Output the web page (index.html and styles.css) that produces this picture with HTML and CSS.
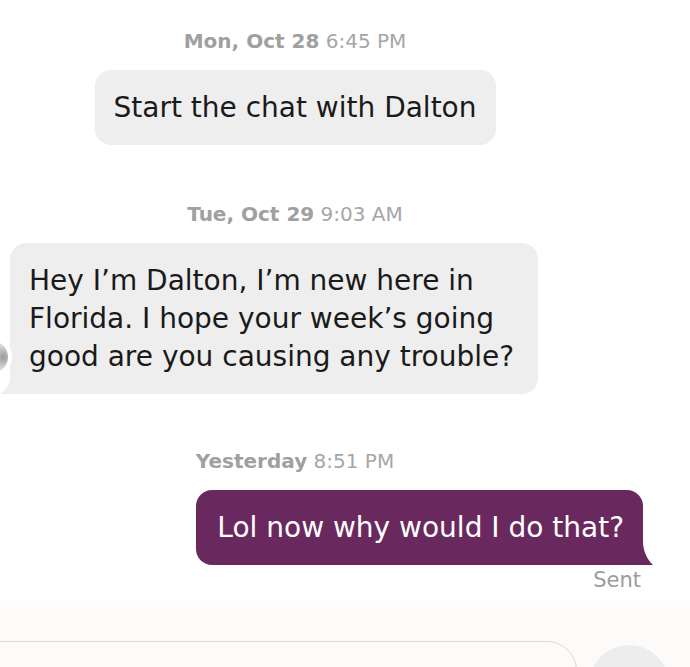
FILE: index.html
```html
<!DOCTYPE html>
<html lang="en">
<head>
  <meta charset="UTF-8" />
  <title>Chat with Dalton</title>
  <meta name="viewport" content="width=device-width, initial-scale=1" />
  <link rel="stylesheet" href="styles.css">
</head>
<body>
  <div class="chat">
    <div class="thread">
      <div class="stamp"><b>Mon, Oct 28</b> 6:45 PM</div>
      <div class="row center">
        <div class="bubble system">Start the chat with Dalton</div>
      </div>

      <div class="stamp"><b>Tue, Oct 29</b> 9:03 AM</div>
      <div class="row left">
        <div class="avatar"></div>
        <div class="bubble received">
          Hey I’m Dalton, I’m new here in<br>
          Florida. I hope your week’s going<br>
          good are you causing any trouble?
          <svg class="tail tail-left" width="14" height="16" viewBox="0 0 14 16"><path d="M14 0 L14 16 L0 16 C6 12 10 6 10 0 Z" fill="#eeeeee"/></svg>
        </div>
      </div>

      <div class="stamp"><b>Yesterday</b> 8:51 PM</div>
      <div class="row right">
        <div class="bubble sent">
          Lol now why would I do that?
          <svg class="tail tail-right" width="12" height="24" viewBox="0 0 12 24"><path d="M0 0 L0 24 L12 24 C6 18 2 10 2 0 Z" fill="#69295e"/></svg>
        </div>
      </div>
      <div class="status">Sent</div>
    </div>

    <div class="composer">
      <div class="input"></div>
      <div class="send"></div>
    </div>
  </div>
</body>
</html>
```

FILE: styles.css
```css
body {
  margin: 0;
  font-family: "DejaVu Sans", "Liberation Sans", Arial, sans-serif;
  background-color: #ffffff;
  overflow: hidden;
}

.chat {
  height: 667px;
  display: flex;
  flex-direction: column;
  overflow: hidden;
}

.thread {
  display: flex;
  flex-direction: column;
  padding-top: 28px;
}

.stamp {
  text-align: center;
  padding-right: 100px;
  font-size: 20px;
  line-height: 26px;
  color: #a6a6a6;
  margin-bottom: 16px;
}

.stamp b {
  font-weight: bold;
  color: #a0a0a0;
}

.row {
  display: flex;
  margin-bottom: 56px;
}

.row.center {
  justify-content: center;
  padding-right: 100px;
}

.row.left {
  justify-content: flex-start;
  padding-left: 10px;
  position: relative;
  margin-bottom: 54px;
}

.row.right {
  justify-content: flex-end;
  padding-right: 47px;
  margin-bottom: 3px;
}

.bubble {
  position: relative;
  font-size: 28px;
  line-height: 38px;
  padding: 19px 19px 18px;
  border-radius: 16px;
  color: #1a1a1a;
}

.bubble.system,
.bubble.received {
  background-color: #eeeeee;
}

.bubble.received {
  padding-right: 24px;
  border-bottom-left-radius: 0;
}

.bubble.sent {
  background-color: #69295e;
  color: #ffffff;
  padding-left: 21px;
  border-bottom-right-radius: 0;
}

.tail {
  position: absolute;
  bottom: 0;
}

.tail-left {
  left: -10px;
}

.tail-right {
  right: -10px;
}

.avatar {
  position: absolute;
  left: -28px;
  top: 94px;
  width: 32px;
  height: 32px;
  border: 4px solid #ffffff;
  border-radius: 50%;
  background: radial-gradient(circle at 85% 50%, #9a9a9a 0, #d6d6d6 35%, #f2f2f2 65%);
  z-index: 2;
}

.status {
  text-align: right;
  padding-right: 49px;
  font-size: 21px;
  line-height: 24px;
  color: #9c9c9c;
}

.composer {
  flex-shrink: 0;
  margin-top: auto;
  height: 77px;
  background: linear-gradient(#ffffff, #fcfbf9 25%);
  display: flex;
  align-items: flex-start;
  gap: 12px;
  padding-top: 49px;
  box-sizing: border-box;
  overflow: hidden;
}

.input {
  margin-left: -30px;
  width: 605px;
  height: 60px;
  border: 1.5px solid #d9d9d9;
  border-radius: 30px;
  background-color: #fcfbf9;
  flex-shrink: 0;
}

.send {
  margin-top: 4px;
  width: 80px;
  height: 80px;
  border-radius: 50%;
  background-color: #ededed;
  flex-shrink: 0;
}
```
